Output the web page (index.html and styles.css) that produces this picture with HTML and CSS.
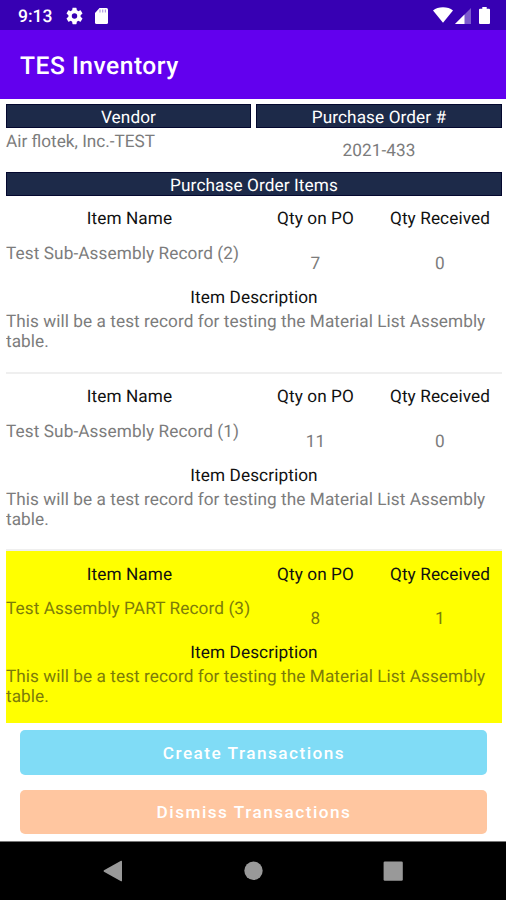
FILE: index.html
```html
<!DOCTYPE html>
<html lang="en">
<head>
<meta charset="utf-8">
<title>TES Inventory</title>
<link rel="stylesheet" href="styles.css">
</head>
<body>
<div class="status">
  <span class="clock">9:13</span>
  <svg class="gear" width="18" height="18" viewBox="2 2 20 20"><path fill="#fff" d="M19.14 12.94c.04-.3.06-.61.06-.94 0-.32-.02-.64-.07-.94l2.03-1.58a.49.49 0 0 0 .12-.61l-1.92-3.32a.49.49 0 0 0-.59-.22l-2.39.96c-.5-.38-1.03-.7-1.62-.94l-.36-2.54a.48.48 0 0 0-.48-.41h-3.84c-.24 0-.43.17-.47.41l-.36 2.54c-.59.24-1.13.57-1.62.94l-2.39-.96a.48.48 0 0 0-.59.22L2.74 8.87c-.12.21-.08.47.12.61l2.03 1.58c-.05.3-.09.63-.09.94s.02.64.07.94l-2.03 1.58a.49.49 0 0 0-.12.61l1.92 3.32c.12.22.37.29.59.22l2.39-.96c.5.38 1.03.7 1.62.94l.36 2.54c.05.24.24.41.48.41h3.84c.24 0 .44-.17.47-.41l.36-2.54c.59-.24 1.13-.56 1.62-.94l2.39.96c.22.08.47 0 .59-.22l1.92-3.32a.49.49 0 0 0-.12-.61l-2.01-1.58zM12 15.2a3.2 3.2 0 1 1 0-6.4 3.2 3.2 0 0 1 0 6.4z"/></svg>
  <svg class="card" width="13" height="16" viewBox="0 0 13 16"><path fill="#fff" d="M4.500 0h7Q13 0 13 1.500V14.500Q13 16 11.500 16H1.500Q0 16 0 14.500V5z"/><path stroke="#3700b3" stroke-opacity=".4" stroke-width="1.200" d="M5 1.500v3M7.700 1.500v3M10.400 1.500v3"/></svg>
  <span class="grow"></span>
  <svg class="wifi" width="20" height="16" viewBox="0 0 20 16"><path fill="#fff" d="M0 3.500Q4 .3 10 .3T20 3.500L10 15.800z"/></svg>
  <svg class="signal" width="16" height="16" viewBox="0 0 16 16"><path fill="#fff" fill-opacity=".35" d="M16 0V16H0z"/><path fill="#fff" d="M9.500 6.500V16H0z"/></svg>
  <svg class="battery" width="11" height="17" viewBox="0 0 11 17"><path fill="#fff" d="M3.300 0h4.400v1.700H10q1 0 1 1V16q0 1-1 1H1q-1 0-1-1V2.700q0-1 1-1h2.300z"/></svg>
</div>
<header class="appbar"><h1>TES Inventory</h1></header>
<main>
  <div class="order">
    <section>
      <h2 class="bar">Vendor</h2>
      <p class="vendor">Air flotek, Inc.-TEST</p>
    </section>
    <section>
      <h2 class="bar">Purchase Order #</h2>
      <p class="number">2021-433</p>
    </section>
  </div>
  <h2 class="bar items-title">Purchase Order Items</h2>
  <div class="list">
    <article class="item">
      <div class="cols labels"><span>Item Name</span><span>Qty on PO</span><span>Qty Received</span></div>
      <div class="cols values"><span class="name">Test Sub-Assembly Record (2)</span><span class="qty">7</span><span class="qty">0</span></div>
      <h3>Item Description</h3>
      <p>This will be a test record for testing the Material List Assembly table.</p>
    </article>
    <article class="item">
      <div class="cols labels"><span>Item Name</span><span>Qty on PO</span><span>Qty Received</span></div>
      <div class="cols values"><span class="name">Test Sub-Assembly Record (1)</span><span class="qty">11</span><span class="qty">0</span></div>
      <h3>Item Description</h3>
      <p>This will be a test record for testing the Material List Assembly table.</p>
    </article>
    <article class="item selected">
      <div class="cols labels"><span>Item Name</span><span>Qty on PO</span><span>Qty Received</span></div>
      <div class="cols values"><span class="name">Test Assembly PART Record (3)</span><span class="qty">8</span><span class="qty">1</span></div>
      <h3>Item Description</h3>
      <p>This will be a test record for testing the Material List Assembly table.</p>
    </article>
  </div>
  <div class="actions">
    <button class="create">Create Transactions</button>
    <button class="dismiss">Dismiss Transactions</button>
  </div>
</main>
<nav class="navbar">
  <svg width="20" height="22" viewBox="0 0 20 22"><path fill="#999" d="M18 .8Q19 .3 19 1.500V20.500Q19 21.700 18 21.200L1 11.700Q0 11 1 10.300z"/></svg>
  <svg width="20" height="20" viewBox="0 0 20 20"><circle cx="10.500" cy="9.800" r="9.200" fill="#999"/></svg>
  <svg width="20" height="20" viewBox="0 0 20 20"><rect x=".6" y=".5" width="19.200" height="19.200" rx="1.300" fill="#999"/></svg>
</nav>
</body>
</html>
```
FILE: styles.css
```css
* { box-sizing: border-box; }
body {
  margin: 0;
  width: 506px;
  height: 900px;
  overflow: hidden;
  display: flex;
  flex-direction: column;
  background: #fff;
  color: #7c7c7c;
  font: 17.2px/20px Roboto, sans-serif;
  letter-spacing: 0.1px;
  text-rendering: geometricPrecision;
}
h1, h2, h3, p { margin: 0; font-weight: 400; font-size: inherit; }

.status {
  height: 30px;
  background: #3700b3;
  display: flex;
  align-items: center;
  padding: 2px 16px 0 18px;
}
.clock { color: #fff; font-weight: 500; letter-spacing: 0; font-size: 17.5px; width: 48px; padding-top: 1px; }
.gear { width: 17px; }
.card { margin-left: 12px; margin-top: -1px; }
.grow { flex: 1; }
.wifi { margin-top: -3px; }
.signal { margin-left: 2px; }
.battery { margin-left: 8px; margin-top: -2px; }

.appbar {
  height: 69px;
  background: #6200ee;
  display: flex;
  align-items: center;
  padding: 5px 20px 0;
}
.appbar h1 { color: #fff; font-size: 24.6px; font-weight: 500; letter-spacing: 0.5px; }

main { height: 742px; padding: 5px 4px 0 6px; display: flex; flex-direction: column; }
.order { display: grid; grid-template-columns: 245px 246px; column-gap: 5px; height: 68px; }
.bar {
  height: 24px;
  background: #1d2a49;
  border: 1px solid #04082f;
  padding-top: 2px;
  line-height: 22px;
  color: #fff;
  text-align: center;
}
.vendor { padding-top: 4px; letter-spacing: 0; }
.number { padding-top: 13px; text-align: center; }
.items-title { width: 496px; height: 24px; flex: none; }

.list { height: 527px; width: 496px; overflow: hidden; flex: none; }
.item { height: 177.700px; padding-top: 13.200px; border-bottom: 2px solid #efefef; }
.cols { display: grid; grid-template-columns: 247px 125px 124px; text-align: center; }
.labels, h3 { color: #111; }
.values { padding-top: 14.800px; height: 58.800px; }
.name { text-align: left; white-space: nowrap; }
.qty { padding-top: 10px; }
.item h3 { text-align: center; }
.item p { padding-top: 4px; letter-spacing: 0.060px; }
.selected { background: #ff0; color: #7c7c0a; }

.actions { padding: 7px 15px 0 14px; display: flex; flex-direction: column; gap: 15px; }
.actions button {
  height: 45px;
  padding: 1px 0 0 1px;
  border: 0;
  border-radius: 5px;
  color: #fff;
  font: 500 17.2px/20px Roboto, sans-serif;
  letter-spacing: 1.480px;
}
.actions .create { background: #80dcf6; }
.actions .dismiss { background: #ffc6a0; height: 44px; padding-top: 0; }

.navbar {
  height: 59px;
  background: #000;
  border-top: 1px solid #777;
  display: flex;
  justify-content: space-between;
  align-items: center;
  padding: 0 103px;
}
```
